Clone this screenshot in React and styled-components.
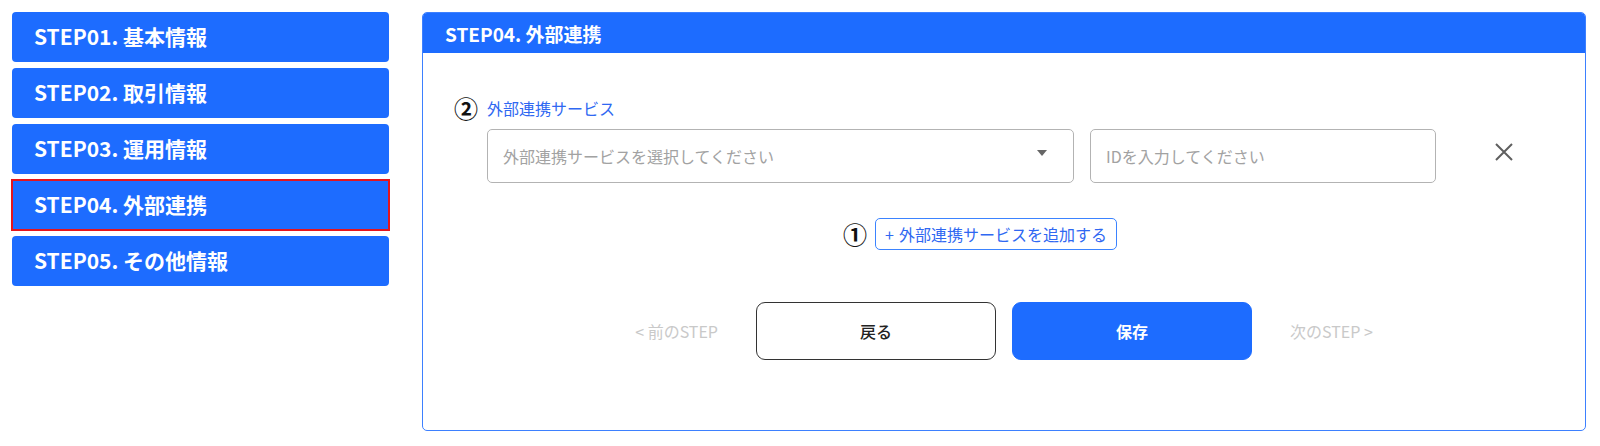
import React from "react"
import styled, { createGlobalStyle } from "styled-components"

const GlobalStyle = createGlobalStyle`
  body {
    margin: 0;
    background: #fff;
    font-family: "Noto Sans CJK JP", "Noto Sans", sans-serif;
  }
`

const blue = "#1d6cff"

const Page = styled.div`
  display: flex;
  align-items: flex-start;
  padding: 12px 14px 0 12px;
`

const Sidebar = styled.nav`
  width: 377px;
  display: flex;
  flex-direction: column;
  gap: 6px;
  flex-shrink: 0;
`

const StepItem = styled.div`
  height: 50px;
  box-sizing: border-box;
  display: flex;
  align-items: center;
  padding: 0 0 2px 22px;
  background: ${blue};
  color: #fff;
  font-size: 21px;
  font-weight: 700;
  outline: ${(p) => (p.$active ? "2px solid #e5141d" : "none")};
  outline-offset: -1px;
  border-radius: ${(p) => (p.$active ? "0" : "4px")};
`

const Panel = styled.section`
  margin-left: 33px;
  flex: 1;
  height: 419px;
  box-sizing: border-box;
  border: 1px solid #3d80ff;
  border-radius: 5px;
  overflow: hidden;
  display: flex;
  flex-direction: column;
`

const PanelHeader = styled.header`
  height: 40px;
  background: ${blue};
  color: #fff;
  display: flex;
  align-items: center;
  padding-left: 22px;
  font-size: 19px;
  font-weight: 700;
`

const PanelBody = styled.div`
  padding: 43px 64px 0;
  display: flex;
  flex-direction: column;
`

const FieldLabel = styled.div`
  position: relative;
  color: #2f68f2;
  font-size: 16px;
  line-height: 24px;
`

const Mark = styled.span`
  position: absolute;
  top: 50%;
  transform: translateY(-50%);
  right: 100%;
  margin-right: 9px;
  color: #111;
  font-size: 24px;
  line-height: 1;
  font-weight: 700;
`

const FieldRow = styled.div`
  margin-top: 9px;
  display: flex;
  align-items: center;
`

const Control = styled.div`
  width: ${(p) => p.$width}px;
  height: 54px;
  box-sizing: border-box;
  border: 1.5px solid #b3b3b3;
  border-radius: 5px;
  display: flex;
  align-items: center;
  justify-content: space-between;
  padding: 0 26px 0 15px;
  color: #a2a2a2;
  font-size: 16px;
  margin-right: 16px;
`

const Caret = styled.span`
  width: 0;
  height: 0;
  border-left: 5px solid transparent;
  border-right: 5px solid transparent;
  border-top: 6px solid #666;
  margin-top: -6px;
`

const RemoveButton = styled.button`
  margin: -8px 0 0 40px;
  width: 24px;
  height: 24px;
  padding: 0;
  border: none;
  background: none;
  display: flex;
  align-items: center;
  justify-content: center;
  cursor: pointer;
`

const AddRow = styled.div`
  margin-top: 35px;
  display: flex;
  justify-content: center;
  padding-right: 16px;
`

const AddButton = styled.button`
  position: relative;
  height: 32px;
  box-sizing: border-box;
  padding: 0 9px;
  border: 1.5px solid #3b83ff;
  border-radius: 5px;
  background: #fff;
  color: #2f68f2;
  font-family: inherit;
  font-size: 16px;
  display: flex;
  align-items: center;
  gap: 5px;
`

const Footer = styled.div`
  margin-top: 52px;
  display: flex;
  justify-content: center;
  align-items: center;
  margin-left: -64px;
  margin-right: -64px;
`

const StepLink = styled.span`
  color: #c9c9c9;
  font-size: 16px;
  margin: ${(p) => (p.$next ? "0 0 0 38px" : "0 38px 0 0")};
`

const ActionButton = styled.button`
  width: 240px;
  height: 58px;
  box-sizing: border-box;
  border-radius: 9px;
  font-family: inherit;
  font-size: 16px;
  font-weight: ${(p) => (p.$primary ? 700 : 500)};
  border: ${(p) => (p.$primary ? `1.5px solid ${blue}` : "1.5px solid #333")};
  background: ${(p) => (p.$primary ? blue : "#fff")};
  color: ${(p) => (p.$primary ? "#fff" : "#222")};
  & + & {
    margin-left: 16px;
  }
`

const steps = [
  "STEP01. 基本情報",
  "STEP02. 取引情報",
  "STEP03. 運用情報",
  "STEP04. 外部連携",
  "STEP05. その他情報",
]

const App = () => {
  return (
    <>
      <GlobalStyle />
      <Page>
        <Sidebar>
          {steps.map((s, i) => (
            <StepItem key={s} $active={i === 3}>
              {s}
            </StepItem>
          ))}
        </Sidebar>
        <Panel>
          <PanelHeader>STEP04. 外部連携</PanelHeader>
          <PanelBody>
            <FieldLabel>
              <Mark>②</Mark>
              外部連携サービス
            </FieldLabel>
            <FieldRow>
              <Control $width={587}>
                外部連携サービスを選択してください
                <Caret />
              </Control>
              <Control $width={346}>IDを入力してください</Control>
              <RemoveButton aria-label="削除">
                <svg width="20" height="20" viewBox="0 0 20 20">
                  <path
                    d="M2 2 L18 18 M18 2 L2 18"
                    stroke="#5f5f5f"
                    strokeWidth="2"
                    fill="none"
                  />
                </svg>
              </RemoveButton>
            </FieldRow>
            <AddRow>
              <AddButton>
                <Mark>①</Mark>
                <span>+</span>
                外部連携サービスを追加する
              </AddButton>
            </AddRow>
            <Footer>
              <StepLink>&lt; 前のSTEP</StepLink>
              <ActionButton>戻る</ActionButton>
              <ActionButton $primary>保存</ActionButton>
              <StepLink $next>次のSTEP &gt;</StepLink>
            </Footer>
          </PanelBody>
        </Panel>
      </Page>
    </>
  )
}

export default App
